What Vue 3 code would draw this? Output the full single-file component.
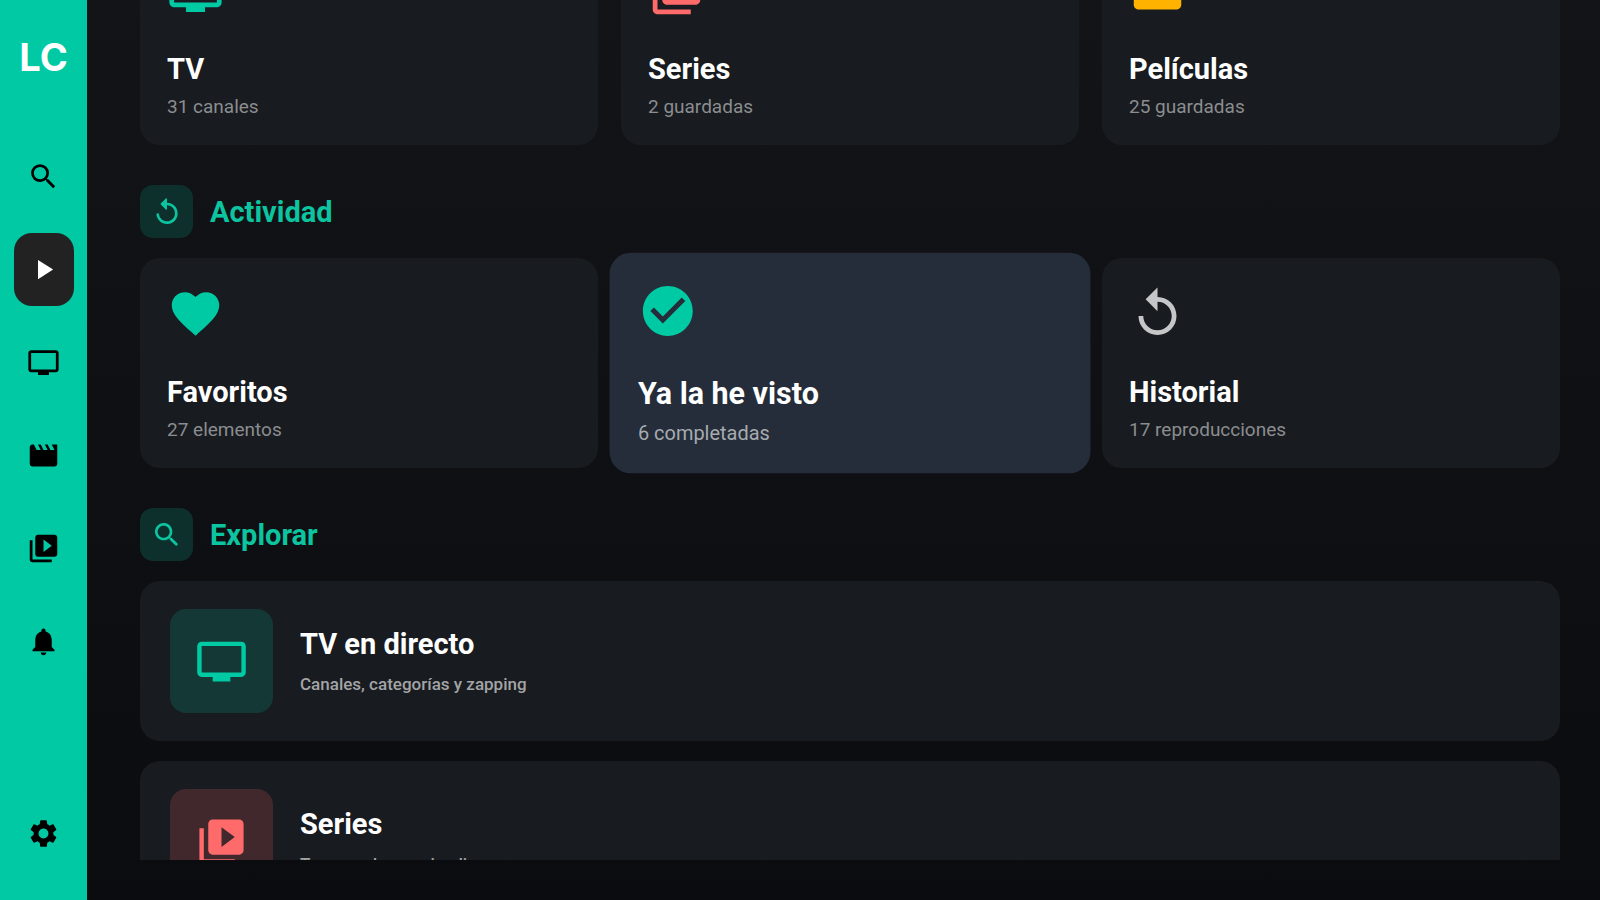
<script setup>
const paths = {
  search: 'M15.5 14h-.79l-.28-.27A6.471 6.471 0 0 0 16 9.5 6.5 6.5 0 1 0 9.5 16c1.61 0 3.09-.59 4.23-1.57l.27.28v.79l5 4.99L20.49 19l-4.99-5zm-6 0C7.01 14 5 11.99 5 9.5S7.01 5 9.5 5 14 7.01 14 9.5 11.99 14 9.5 14z',
  searchRound: 'M15.5 14h-.79l-.28-.27c1.2-1.4 1.82-3.31 1.48-5.34-.47-2.78-2.79-5-5.59-5.34-4.23-.52-7.79 3.04-7.27 7.27.34 2.8 2.56 5.12 5.34 5.59 2.03.34 3.94-.28 5.34-1.48l.27.28v.79l4.25 4.25c.41.41 1.08.41 1.49 0 .41-.41.41-1.08 0-1.49L15.5 14zm-6 0C7.01 14 5 11.99 5 9.5S7.01 5 9.5 5 14 7.01 14 9.5 11.99 14 9.5 14z',
  play: 'M8 5v14l11-7z',
  tv: 'M21 3H3c-1.1 0-2 .9-2 2v12c0 1.1.9 2 2 2h5v2h8v-2h5c1.1 0 2-.9 2-2V5c0-1.1-.9-2-2-2zm0 14H3V5h18v12z',
  movie: 'M18 4l2 4h-3l-2-4h-2l2 4h-3l-2-4H8l2 4H7L5 4H4c-1.1 0-1.99.9-1.99 2L2 18c0 1.1.9 2 2 2h16c1.1 0 2-.9 2-2V4h-4z',
  library: 'M4 6H2v14c0 1.1.9 2 2 2h14v-2H4V6zm16-4H8c-1.1 0-2 .9-2 2v12c0 1.1.9 2 2 2h12c1.1 0 2-.9 2-2V4c0-1.1-.9-2-2-2zm-8 12.5v-9l6 4.5-6 4.5z',
  bell: 'M12 22c1.1 0 2-.9 2-2h-4c0 1.1.89 2 2 2zm6-6v-5c0-3.07-1.64-5.64-4.5-6.32V4c0-.83-.67-1.5-1.5-1.5s-1.5.67-1.5 1.5v.68C7.63 5.36 6 7.92 6 11v5l-2 2v1h16v-1l-2-2z',
  gear: 'M19.14 12.94c.04-.3.06-.61.06-.94 0-.32-.02-.64-.07-.94l2.03-1.58c.18-.14.23-.41.12-.61l-1.92-3.32c-.12-.22-.37-.29-.59-.22l-2.39.96c-.5-.38-1.03-.7-1.62-.94l-.36-2.54c-.04-.24-.24-.41-.48-.41h-3.84c-.24 0-.43.17-.47.41l-.36 2.54c-.59.24-1.13.57-1.62.94l-2.39-.96c-.22-.08-.47 0-.59.22L2.74 8.87c-.12.21-.08.47.12.61l2.03 1.58c-.05.3-.09.63-.09.94s.02.64.07.94l-2.03 1.58c-.18.14-.23.41-.12.61l1.92 3.32c.12.22.37.29.59.22l2.39-.96c.5.38 1.03.7 1.62.94l.36 2.54c.05.24.24.41.48.41h3.84c.24 0 .44-.17.47-.41l.36-2.54c.59-.24 1.13-.56 1.62-.94l2.39.96c.22.08.47 0 .59-.22l1.92-3.32c.12-.22.07-.47-.12-.61l-2.01-1.58zM12 15.6c-1.98 0-3.6-1.62-3.6-3.6s1.62-3.6 3.6-3.6 3.6 1.62 3.6 3.6-1.62 3.6-3.6 3.6z',
  heart: 'M12 21.35l-1.45-1.32C5.4 15.36 2 12.28 2 8.5 2 5.42 4.42 3 7.5 3c1.74 0 3.41.81 4.5 2.09C13.09 3.81 14.76 3 16.5 3 19.58 3 22 5.42 22 8.5c0 3.78-3.4 6.86-8.55 11.54L12 21.35z',
  check: 'M12 2C6.48 2 2 6.48 2 12s4.48 10 10 10 10-4.48 10-10S17.52 2 12 2zm-2 15l-5-5 1.41-1.41L10 14.17l7.59-7.59L19 8l-9 9z',
  replay: 'M12 5V1L7 6l5 5V7c3.31 0 6 2.69 6 6s-2.69 6-6 6-6-2.69-6-6H4c0 4.42 3.58 8 8 8s8-3.58 8-8-3.58-8-8-8z',
  replayRound: 'M12 5V2.21c0-.45-.54-.67-.85-.35l-3.8 3.79c-.2.2-.2.51 0 .71l3.79 3.79c.32.31.86.09.86-.36V7c3.73 0 6.68 3.42 5.86 7.29-.47 2.27-2.31 4.1-4.57 4.57-3.57.75-6.75-1.7-7.23-5.01-.07-.48-.49-.85-.98-.85-.6 0-1.08.53-1 1.13.62 4.39 4.8 7.64 9.53 6.72 3.12-.61 5.63-3.12 6.24-6.24C20.84 9.48 16.94 5 12 5z',
}

const nav = [
  { icon: 'search', label: 'Buscar' },
  { icon: 'play', label: 'Inicio', active: true },
  { icon: 'tv', label: 'TV' },
  { icon: 'movie', label: 'Películas' },
  { icon: 'library', label: 'Series' },
  { icon: 'bell', label: 'Notificaciones' },
]

const saved = [
  { title: 'TV', sub: '31 canales', icon: 'tv', tone: 'teal' },
  { title: 'Series', sub: '2 guardadas', icon: 'library', tone: 'coral' },
  { title: 'Películas', sub: '25 guardadas', icon: 'movie', tone: 'amber' },
]

const activity = [
  { title: 'Favoritos', sub: '27 elementos', icon: 'heart', tone: 'teal' },
  { title: 'Ya la he visto', sub: '6 completadas', icon: 'check', tone: 'teal', focused: true },
  { title: 'Historial', sub: '17 reproducciones', icon: 'replay', tone: 'gray' },
]

const explore = [
  { title: 'TV en directo', sub: 'Canales, categorías y zapping', icon: 'tv', tone: 'teal' },
  { title: 'Series', sub: 'Temporadas y episodios', icon: 'library', tone: 'coral' },
]
</script>

<template>
  <div class="app">
    <aside class="sidebar">
      <div class="logo">LC</div>
      <nav class="nav">
        <button
          v-for="item in nav"
          :key="item.icon"
          type="button"
          class="nav-item"
          :class="{ active: item.active }"
          :aria-label="item.label"
        >
          <svg viewBox="0 0 24 24" aria-hidden="true"><path :d="paths[item.icon]" /></svg>
        </button>
      </nav>
      <button type="button" class="nav-item settings" aria-label="Ajustes">
        <svg viewBox="0 0 24 24" aria-hidden="true"><path :d="paths.gear" /></svg>
      </button>
    </aside>

    <main class="viewport">
      <div class="content">
        <section class="cards">
          <button v-for="c in saved" :key="c.title" type="button" class="card">
            <svg class="card-icon" :class="c.tone" viewBox="0 0 24 24" aria-hidden="true"><path :d="paths[c.icon]" /></svg>
            <span class="title">{{ c.title }}</span>
            <span class="sub">{{ c.sub }}</span>
          </button>
        </section>

        <section class="group">
          <header class="heading">
            <span class="badge"><svg viewBox="0 0 24 24" aria-hidden="true"><path :d="paths.replayRound" /></svg></span>
            <h2>Actividad</h2>
          </header>
          <div class="cards">
            <button v-for="c in activity" :key="c.title" type="button" class="card" :class="{ focused: c.focused }">
              <svg class="card-icon" :class="c.tone" viewBox="0 0 24 24" aria-hidden="true"><path :d="paths[c.icon]" /></svg>
              <span class="title">{{ c.title }}</span>
              <span class="sub">{{ c.sub }}</span>
            </button>
          </div>
        </section>

        <section class="group">
          <header class="heading">
            <span class="badge"><svg viewBox="0 0 24 24" aria-hidden="true"><path :d="paths.searchRound" /></svg></span>
            <h2>Explorar</h2>
          </header>
          <div class="rows">
            <button v-for="r in explore" :key="r.title" type="button" class="row">
              <span class="tile" :class="r.tone">
                <svg viewBox="0 0 24 24" aria-hidden="true"><path :d="paths[r.icon]" /></svg>
              </span>
              <span class="row-text">
                <span class="title">{{ r.title }}</span>
                <span class="desc">{{ r.sub }}</span>
              </span>
            </button>
          </div>
        </section>
      </div>
    </main>
  </div>
</template>

<style>
body {
  margin: 0;
  overflow: hidden;
  background: #0b0c10;
}
</style>

<style scoped>
.app {
  display: flex;
  height: 100vh;
  font-family: Roboto, 'Liberation Sans', sans-serif;
  color: #fff;
  background: linear-gradient(180deg, #131418 0%, #0b0c10 100%);
}

button {
  margin: 0;
  border: 0;
  font: inherit;
  color: inherit;
  text-align: left;
  cursor: pointer;
}

svg {
  display: block;
  fill: currentColor;
}

.sidebar {
  box-sizing: border-box;
  flex: none;
  display: flex;
  flex-direction: column;
  align-items: center;
  width: 87px;
  padding: 33px 0 30px;
  background: #00c9a3;
}

.logo {
  font-family: Inter, Roboto, sans-serif;
  font-size: 38px;
  font-weight: 700;
  line-height: 48px;
}

.nav {
  display: flex;
  flex-direction: column;
  gap: 20px;
  margin-top: 59px;
}

.nav-item {
  display: flex;
  align-items: center;
  justify-content: center;
  width: 60px;
  height: 73px;
  padding: 0;
  border-radius: 18px;
  background: none;
  color: #000;
}

.nav-item svg {
  width: 33px;
  height: 33px;
}

.nav-item.active {
  background: #222;
  color: #fff;
}

.settings {
  margin-top: auto;
}

.viewport {
  flex: 1;
  display: flex;
  flex-direction: column;
  justify-content: flex-start;
  min-width: 0;
  margin-bottom: 40px;
  padding: 0 40px 0 53px;
  overflow: hidden;
}

.content {
  display: flex;
  flex-direction: column;
  gap: 40px;
  margin-top: -65px;
}

.cards {
  display: grid;
  grid-template-columns: repeat(3, 1fr);
  gap: 23px;
}

.card {
  display: flex;
  flex-direction: column;
  align-items: flex-start;
  padding: 27px 27px 26px;
  border-radius: 20px;
  background: #181b1f;
}

.card.focused {
  background: #242d39;
  transform: scale(1.05);
}

.card-icon {
  width: 57px;
  height: 57px;
  margin-bottom: 32px;
}

.teal { color: #00caa3; }
.coral { color: #ff6b6b; }
.amber { color: #ffb300; }
.gray { color: #c5c6c8; }

.title {
  font-size: 29px;
  font-weight: 700;
  line-height: 36px;
  color: #fff;
}

.sub {
  margin-top: 8px;
  font-size: 19px;
  line-height: 24px;
  color: #8b8d90;
}

.focused .sub {
  color: #a7abb0;
}

.group {
  display: flex;
  flex-direction: column;
  gap: 20px;
}

.heading {
  display: flex;
  align-items: center;
  gap: 17px;
  color: #0cc4a0;
}

.heading h2 {
  margin: 0;
  font-size: 29px;
  font-weight: 700;
  line-height: 36px;
}

.badge {
  display: flex;
  align-items: center;
  justify-content: center;
  width: 53px;
  height: 53px;
  border-radius: 13px;
  background: #0d302c;
}

.badge svg {
  width: 32px;
  height: 32px;
}

.rows {
  display: flex;
  flex-direction: column;
  gap: 20px;
}

.row {
  display: flex;
  align-items: center;
  gap: 27px;
  padding: 28px 30px;
  border-radius: 20px;
  background: #181b1f;
}

.tile {
  display: flex;
  align-items: center;
  justify-content: center;
  width: 103px;
  height: 104px;
  border-radius: 16px;
}

.tile.teal { background: #143835; }
.tile.coral { background: #40282c; }

.tile svg {
  width: 53px;
  height: 53px;
}

.row-text {
  display: flex;
  flex-direction: column;
  gap: 10px;
}

.desc {
  font-size: 17px;
  font-weight: 500;
  line-height: 24px;
  color: #a3a4a6;
}
</style>
